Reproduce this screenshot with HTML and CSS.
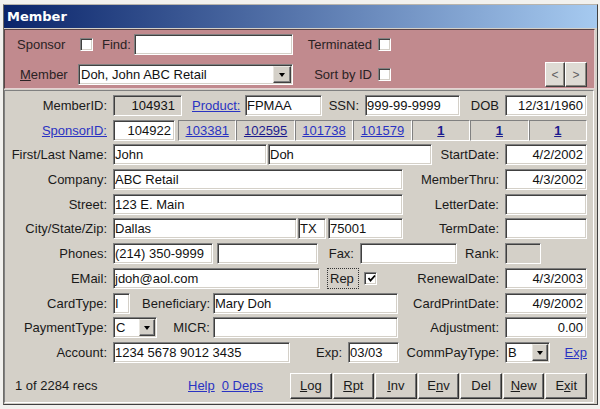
FILE: index.html
```html
<!DOCTYPE html>
<html>
<head>
<meta charset="utf-8">
<title>Member</title>
<link rel="stylesheet" href="styles.css">
</head>
<body>
<div class="window">
  <div class="titlebar">Member</div>

  <div class="search">
    <div class="srow srow-1">
      <span class="slabel pad12">Sponsor</span>
      <span class="cbcell"><span class="cb"></span></span>
      <span class="slabel pad5">Find:</span>
      <span class="field"></span>
      <span class="slabel right">Terminated</span>
      <span class="cbcell cbcell-r"><span class="cb"></span></span>
    </div>
    <div class="srow srow-2">
      <span class="slabel pad15"><u>M</u>ember</span>
      <span class="field combo"><span class="val">Doh, John ABC Retail</span><span class="drop drop-wide"><i class="tri"></i></span></span>
      <span class="slabel right">Sort by ID</span>
      <span class="cbcell cbcell-r"><span class="cb"></span></span>
      <span></span>
      <span class="nav"><span class="navbtn">&lt;</span><span class="navbtn">&gt;</span></span>
    </div>
  </div>

  <div class="form">
    <div class="row r-a">
      <span class="lbl">MemberID:</span>
      <span class="field ro num numwide">104931</span>
      <span class="lbl-left"><a href="#">Product:</a></span>
      <span class="field">FPMAA</span>
      <span class="lbl">SSN:</span>
      <span class="field">999-99-9999</span>
      <span class="lbl">DOB</span>
      <span class="field num">12/31/1960</span>
    </div>

    <div class="row r-b">
      <span class="lbl"><a href="#">SponsorID:</a></span>
      <span class="field num mr3">104922</span>
      <div class="links">
        <span class="cell"><a href="#">103381</a></span>
        <span class="cell"><a href="#" class="dark">102595</a></span>
        <span class="cell"><a href="#">101738</a></span>
        <span class="cell"><a href="#">101579</a></span>
        <span class="cell"><a href="#" class="dark bold">1</a></span>
        <span class="cell"><a href="#" class="dark bold">1</a></span>
        <span class="cell"><a href="#" class="dark bold">1</a></span>
      </div>
    </div>

    <div class="row r-c">
      <span class="lbl">First/Last Name:</span>
      <span class="field mr1">John</span>
      <span class="field">Doh</span>
      <span class="lbl">StartDate:</span>
      <span class="field num">4/2/2002</span>
    </div>

    <div class="row r-d">
      <span class="lbl">Company:</span>
      <span class="field">ABC Retail</span>
      <span class="lbl">MemberThru:</span>
      <span class="field num">4/3/2002</span>
    </div>

    <div class="row r-d">
      <span class="lbl">Street:</span>
      <span class="field">123 E. Main</span>
      <span class="lbl">LetterDate:</span>
      <span class="field num"></span>
    </div>

    <div class="row r-f">
      <span class="lbl">City/State/Zip:</span>
      <span class="field mr1">Dallas</span>
      <span class="field mr2">TX</span>
      <span class="field">75001</span>
      <span class="lbl">TermDate:</span>
      <span class="field num"></span>
    </div>

    <div class="row r-g">
      <span class="lbl">Phones:</span>
      <span class="field mr4">(214) 350-9999</span>
      <span class="field"></span>
      <span class="lbl">Fax:</span>
      <span class="field"></span>
      <span class="lbl">Rank:</span>
      <span class="field ro"></span>
    </div>

    <div class="row r-h">
      <span class="lbl">EMail:</span>
      <span class="field">jdoh@aol.com</span>
      <span class="repcell"><span class="rep">Rep</span></span>
      <span class="cbcell"><span class="cb"><svg width="9" height="9" viewBox="0 0 9 9"><polyline points="1.5,4 3.5,6.5 8,1.5" fill="none" stroke="#000" stroke-width="1.8"/></svg></span></span>
      <span class="lbl">RenewalDate:</span>
      <span class="field num">4/3/2003</span>
    </div>

    <div class="row r-i">
      <span class="lbl">CardType:</span>
      <span class="field">I</span>
      <span class="lbl tight">Beneficiary:</span>
      <span class="field">Mary Doh</span>
      <span class="lbl">CardPrintDate:</span>
      <span class="field num">4/9/2002</span>
    </div>

    <div class="row r-j">
      <span class="lbl">PaymentType:</span>
      <span class="field combo"><span class="val">C</span><span class="drop"><i class="tri"></i></span></span>
      <span class="lbl tight">MICR:</span>
      <span class="field"></span>
      <span class="lbl">Adjustment:</span>
      <span class="field num">0.00</span>
    </div>

    <div class="row r-k">
      <span class="lbl">Account:</span>
      <span class="field">1234 5678 9012 3435</span>
      <span class="lbl">Exp:</span>
      <span class="field">03/03</span>
      <span class="lbl">CommPayType:</span>
      <span class="field combo"><span class="val">B</span><span class="drop"><i class="tri"></i></span></span>
      <span class="lbl-end"><a href="#">Exp</a></span>
    </div>

    <div class="footer">
      <span class="recs">1 of 2284 recs</span>
      <span class="flinks"><a href="#">Help</a><a href="#">0 Deps</a></span>
      <div class="buttons">
        <span class="btn"><u>L</u>og</span>
        <span class="btn"><u>R</u>pt</span>
        <span class="btn"><u>I</u>nv</span>
        <span class="btn">E<u>n</u>v</span>
        <span class="btn">Del</span>
        <span class="btn"><u>N</u>ew</span>
        <span class="btn">E<u>x</u>it</span>
      </div>
    </div>
  </div>
</div>
</body>
</html>
```

FILE: styles.css
```css
* { box-sizing: border-box; }

html, body {
  margin: 0;
  padding: 0;
}

body {
  width: 600px;
  height: 409px;
  background: #f2f1ee;
  font-family: "Liberation Sans", Arial, sans-serif;
  font-size: 13px;
  color: #1a1a1a;
  padding: 4px 0 0 3px;
  overflow: hidden;
}

a {
  color: #2a33c2;
  text-decoration: underline;
}
a.dark { color: #1c1c8e; }
a.bold { font-weight: bold; }

.window {
  width: 595px;
  height: 401px;
  background: #d4d0c8;
  border: 1px solid;
  border-color: #b8b4ac #404040 #404040 #6e6c68;
}

.titlebar {
  height: 23px;
  margin-bottom: 1px;
  background: linear-gradient(to right, #0a246a, #a6caf0);
  color: #fff;
  font-family: "DejaVu Sans", sans-serif;
  font-weight: bold;
  font-size: 13px;
  line-height: 23px;
  padding-left: 3px;
}

/* ---------- pink search panel ---------- */
.search {
  margin-right: 2px;
  background: #c18a8e;
  border: 1px solid;
  border-color: #5a4446 #e6d2d3 #e6d2d3 #5a4446;
  padding: 4px 0 5px 0;
  display: flex;
  flex-direction: column;
  gap: 7px;
}

.srow {
  display: grid;
  height: 21px;
  align-items: center;
}
.srow-1 { grid-template-columns: 73px 19px 37px 159px 84px 16px; }
.srow-2 { grid-template-columns: 73px 215px 84px 16px 152px 42px; }

.slabel { white-space: nowrap; color: #2a2224; }
.slabel.right { text-align: right; padding-right: 5px; }
.pad12 { padding-left: 12px; }
.pad15 { padding-left: 15px; }
.pad5 { padding-left: 5px; }

.cbcell { display: flex; align-items: center; padding-left: 2px; }
.cbcell-r { padding-left: 1px; }

.cb {
  width: 13px;
  height: 13px;
  background: #fff;
  border: 1px solid;
  border-color: #808080 #fff #fff #808080;
  box-shadow: inset 1px 1px 0 #404040, inset -1px -1px 0 #d4d0c8;
  display: flex;
  align-items: center;
  justify-content: center;
}
.cb svg { display: block; margin: 1px 0 0 1px; }

.nav {
  display: grid;
  grid-template-columns: 20px 22px;
  height: 25px;
}
.navbtn {
  background: #dedbd4;
  border: 1px solid;
  border-color: #fff #404040 #404040 #fff;
  box-shadow: inset -1px -1px 0 #8a8780;
  display: flex;
  align-items: center;
  justify-content: center;
  color: #606060;
  font-size: 12px;
}

/* ---------- fields ---------- */
.field {
  height: 21px;
  background: #fff;
  border: 1px solid;
  border-color: #808080 #fff #fff #808080;
  box-shadow: inset 1px 1px 0 #404040, inset -1px -1px 0 #d4d0c8;
  padding: 0 2px 0 1px;
  display: flex;
  align-items: center;
  white-space: nowrap;
  overflow: hidden;
  color: #111;
}
.field.ro { background: #d4d0c8; }
.field.num { justify-content: flex-end; padding-right: 3px; }
.field.numwide { padding-right: 6px; }

.mr1 { margin-right: 1px; }
.mr2 { margin-right: 2px; }
.mr3 { margin-right: 3px; }
.mr4 { margin-right: 4px; }

.combo { padding: 1px; }
.combo .val { flex: 1; padding-left: 1px; }
.drop {
  width: 16px;
  height: 17px;
  background: #d4d0c8;
  border: 1px solid;
  border-color: #e8e6e0 #404040 #404040 #e8e6e0;
  box-shadow: inset -1px -1px 0 #808080;
  display: flex;
  align-items: center;
  justify-content: center;
}
.drop-wide { width: 18px; }
.tri {
  width: 0;
  height: 0;
  border-left: 3.5px solid transparent;
  border-right: 3.5px solid transparent;
  border-top: 4px solid #000;
  margin-top: 1px;
}

/* ---------- grey form ---------- */
.form {
  margin-top: 1px;
  margin-right: 3px;
  border: 1px solid;
  border-color: #808080 #fff #fff #808080;
  padding: 4px 0 3px 1px;
  display: flex;
  flex-direction: column;
  gap: 3.7px;
}

.row {
  display: grid;
  height: 21px;
  align-items: center;
}

.lbl {
  text-align: right;
  padding-right: 6px;
  white-space: nowrap;
}
.lbl.tight { padding-right: 3px; }
.lbl-left { padding-left: 10px; white-space: nowrap; }
.lbl-end { text-align: right; white-space: nowrap; }

.r-a { grid-template-columns: 107px 69px 63px 77px 43px 95px 45px 82px; }
.r-b { grid-template-columns: 107px 65px 409px; }
.r-c { grid-template-columns: 107px 155px 164px 73px 82px; }
.r-d { grid-template-columns: 107px 290px 102px 82px; }
.r-f { grid-template-columns: 107px 185px 30px 75px 102px 82px; }
.r-g { grid-template-columns: 107px 104px 101px 42px 97px 48px 36px; }
.r-h { grid-template-columns: 107px 207px 42px 15px 128px 82px; }
.r-i { grid-template-columns: 107px 17px 83px 185px 107px 82px; }
.r-j { grid-template-columns: 107px 44px 56px 185px 107px 82px; }
.r-k { grid-template-columns: 107px 177px 58px 51px 106px 45px 37px; }

.links {
  display: grid;
  grid-template-columns: repeat(7, 1fr);
  height: 21px;
}
.cell {
  border: 1px solid;
  border-color: #808080 #fff #fff #808080;
  display: flex;
  align-items: center;
  justify-content: center;
}

.repcell { display: flex; align-items: center; padding-left: 7px; }
.rep {
  width: 32px;
  height: 21px;
  border: 1px dotted #333;
  display: flex;
  align-items: center;
  padding-left: 2px;
}

.footer {
  display: flex;
  align-items: center;
  height: 26px;
  margin-top: 6.3px;
}
.recs { width: 182px; padding-left: 9px; white-space: nowrap; }
.flinks { width: 102px; display: flex; gap: 7px; white-space: nowrap; }

.buttons {
  width: 297px;
  height: 26px;
  display: grid;
  grid-template-columns: repeat(7, 1fr);
  column-gap: 1px;
}
.btn {
  background: #d4d0c8;
  border: 1px solid;
  border-color: #fff #303030 #303030 #fff;
  box-shadow: inset -1px -1px 0 #707070;
  display: flex;
  align-items: center;
  justify-content: center;
  color: #1a1a1a;
}
```
